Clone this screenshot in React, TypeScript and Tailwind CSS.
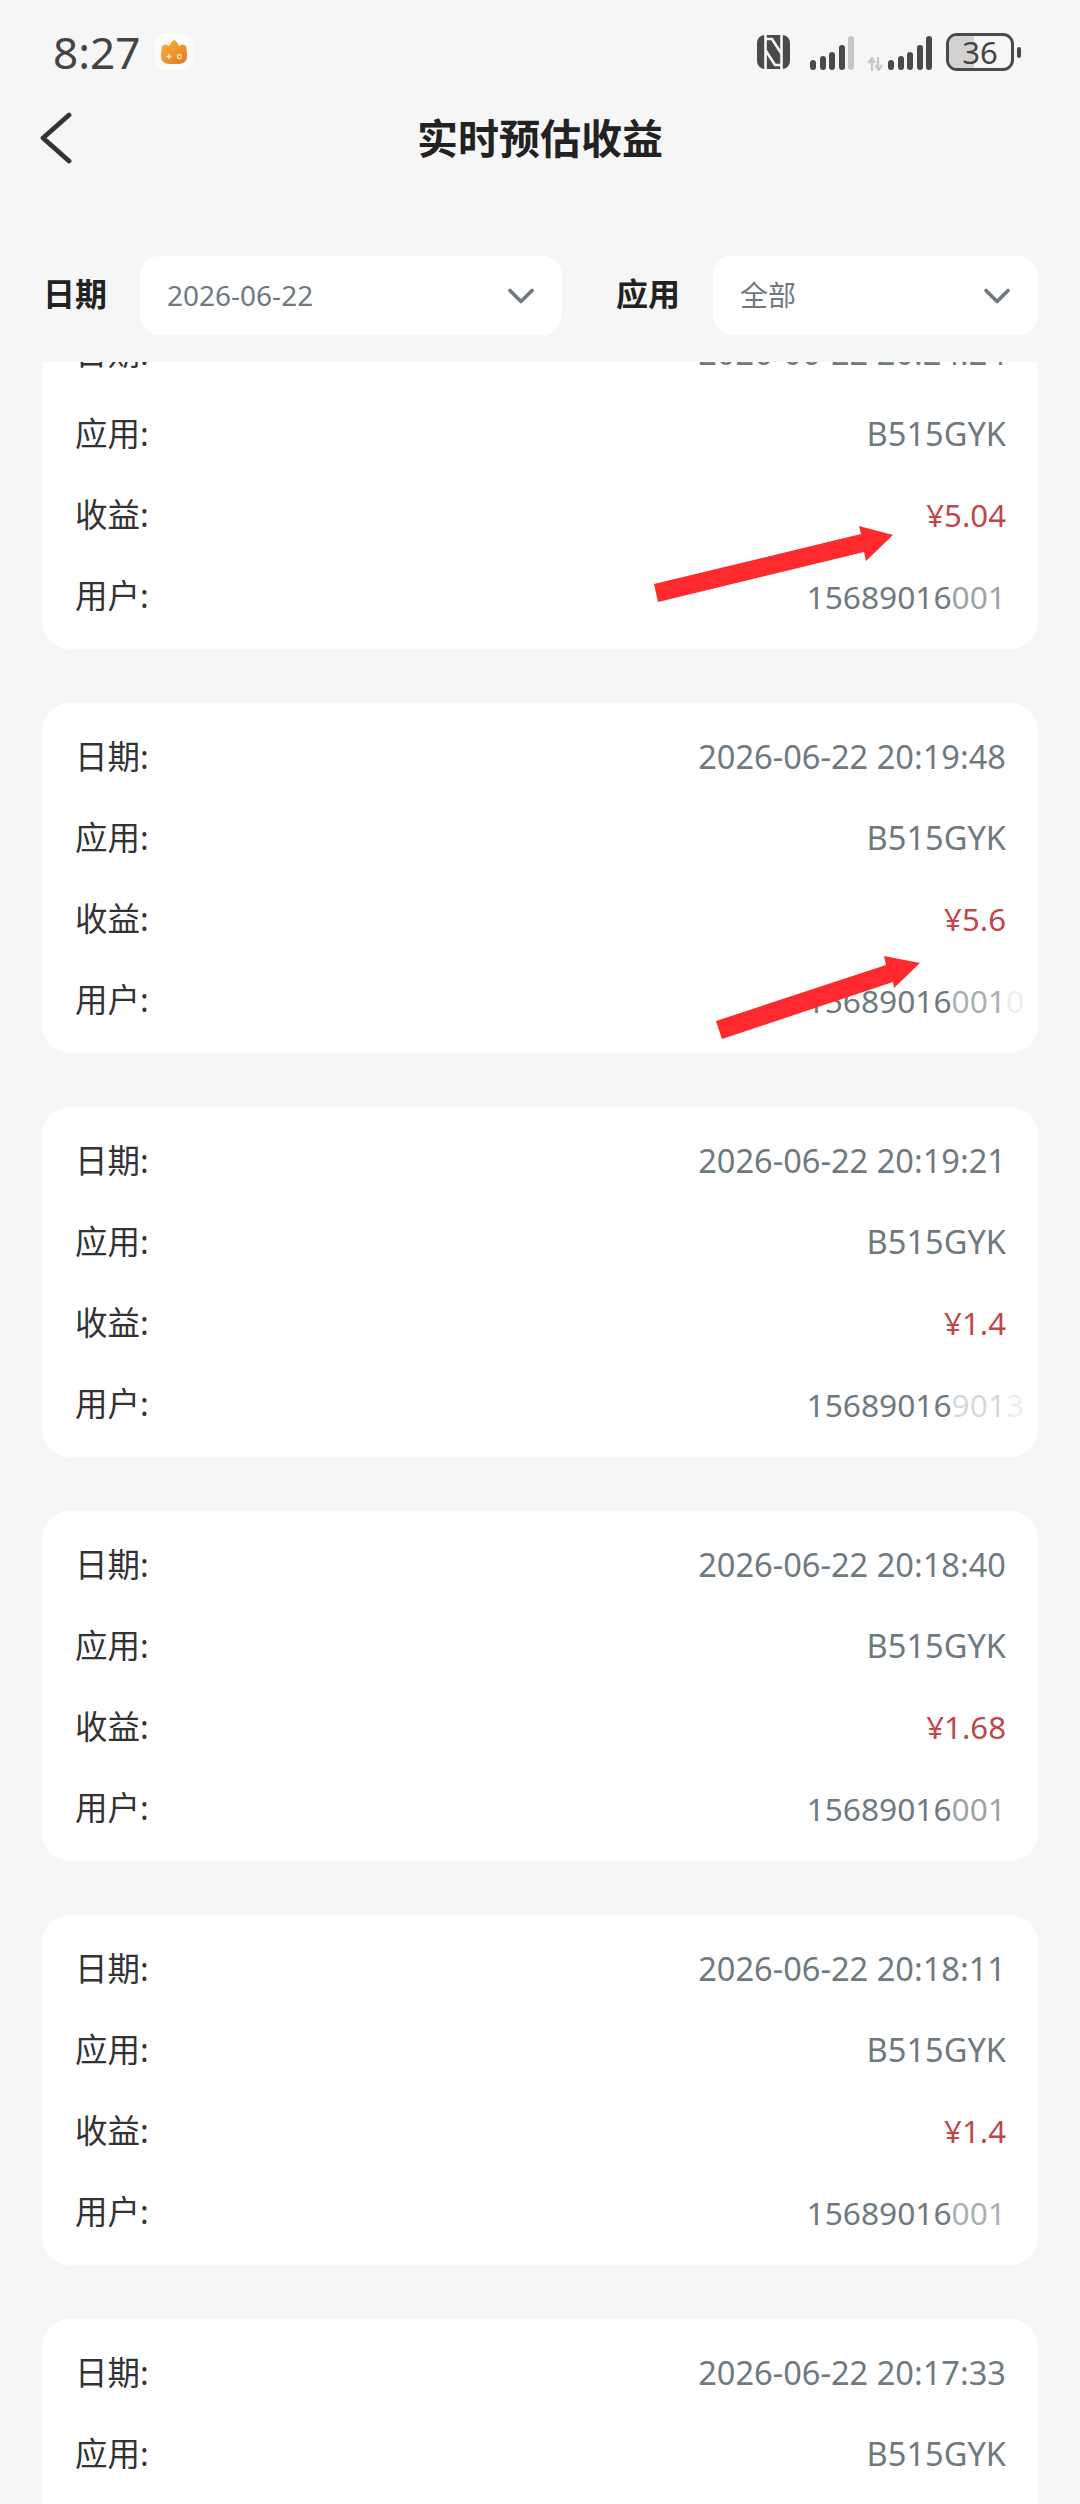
import { ChevronDown } from 'lucide-react'

const FONT = "font-['Noto_Sans','Noto_Sans_CJK_SC',sans-serif]"

const RECORDS = [
  { date: '2026-06-22 20:24:24', amount: '¥5.04', tail: '001', tailClass: 'text-[#6f7a80]/70', fade: '' },
  { date: '2026-06-22 20:19:48', amount: '¥5.6', tail: '001', tailClass: 'text-[#6f7a80]/60', fade: '0' },
  { date: '2026-06-22 20:19:21', amount: '¥1.4', tail: '901', tailClass: 'text-[#6f7a80]/30', fade: '3' },
  { date: '2026-06-22 20:18:40', amount: '¥1.68', tail: '001', tailClass: 'text-[#6f7a80]/70', fade: '' },
  { date: '2026-06-22 20:18:11', amount: '¥1.4', tail: '001', tailClass: 'text-[#6f7a80]/60', fade: '' },
  { date: '2026-06-22 20:17:33', amount: '¥1.4', tail: '001', tailClass: 'text-[#6f7a80]/70', fade: '' },
]

function Row({ label, children }: { label: string; children: React.ReactNode }) {
  return (
    <div className="flex h-[81px] items-center justify-between">
      <span className="text-[32.5px] text-[#333]">{label}:</span>
      {children}
    </div>
  )
}

function Signal({ tops, dim }: { tops: number[]; dim?: boolean }) {
  return (
    <div className="flex h-[36px] items-end gap-[3.5px]">
      {tops.map((h, i) => (
        <span
          key={i}
          className={`w-[6px] rounded-full ${dim && i === tops.length - 1 ? 'bg-[#c6c6c6]' : 'bg-[#4a4a4a]'}`}
          style={{ height: h }}
        />
      ))}
    </div>
  )
}

function StatusBar() {
  return (
    <div className="flex h-[100px] items-center justify-between pl-[53px] pr-[59px] pt-[4px]">
      <div className="flex items-center gap-[15px]">
        <span className="text-[44px] leading-none text-[#444]">8:27</span>
        <div className="flex h-[36px] w-[38px] items-center justify-center rounded-[8px] bg-white/70">
          <svg width="26" height="24" viewBox="0 0 26 24">
            <defs>
              <linearGradient id="flame" x1="0" y1="0" x2="1" y2="1">
                <stop offset="0" stopColor="#f8b53c" />
                <stop offset="1" stopColor="#ec7420" />
              </linearGradient>
            </defs>
            <path d="M1 6 Q5 3 8 6 Q11 1 13 0 Q16 1 18 6 Q21 3 25 6 Q26 12 26 16 Q26 24 17 24 H9 Q0 24 0 16 Q0 12 1 6 Z" fill="url(#flame)" />
            <path d="M5.500 16.500 h5 M8 14 v5" stroke="#ffe3b0" strokeWidth="1.5" />
            <circle cx="18.500" cy="16.500" r="2" fill="none" stroke="#ffe3b0" strokeWidth="1.300" />
          </svg>
        </div>
      </div>
      <div className="flex items-center">
        <svg width="33" height="34" viewBox="0 0 33 34" className="mr-[20px]">
          <rect width="33" height="34" rx="8" fill="#4a4a4a" />
          <path d="M8.500 0 V34 M24.500 0 V34 M9 4 H15 L24 18 M9 16 L18 30 H24" stroke="#f6f6f6" strokeWidth="2.600" fill="none" />
        </svg>
        <Signal tops={[10, 14, 18, 25, 34]} dim />
        <svg width="16" height="14" viewBox="0 0 16 14" className="ml-[13px] mr-[5px] self-end">
          <path d="M5 14 V3 M1.500 6 L5 1 L8 6 M11 0 V11 M8.500 8 L11.500 13 L15 8" stroke="#c6c6c6" strokeWidth="2.200" fill="none" />
        </svg>
        <Signal tops={[10, 14, 18, 25, 34]} />
        <div className="relative ml-[14px] flex h-[38px] w-[68px] items-center justify-center rounded-[11px] border-[3px] border-[#4a4a4a]">
          <span className="absolute inset-y-0 left-0 w-[25px] rounded-l-[8px] bg-[#d2d2d2]" />
          <span className="relative text-[31px] leading-none text-[#444]">36</span>
        </div>
        <span className="ml-[3px] h-[11px] w-[4px] rounded-full bg-[#4a4a4a]" />
      </div>
    </div>
  )
}

function Select({ value, className }: { value: string; className: string }) {
  return (
    <div className={`flex h-[79px] items-center justify-between rounded-[20px] bg-white pl-[27px] pr-[19px] ${className}`}>
      <span className="pb-[2px] text-[28px] text-[#6f7a80]">{value}</span>
      <ChevronDown size={44} strokeWidth={2} className="text-[#6f7a80]" />
    </div>
  )
}

export default function App() {
  return (
    <div className={`relative h-[2504px] w-[1080px] overflow-hidden bg-[#f6f6f6] ${FONT}`}>
      <StatusBar />

      <div className="relative flex h-[78px] items-center justify-center">
        <svg width="32" height="52" viewBox="0 0 32 52" className="absolute left-[40px] top-[12px]">
          <path d="M29 3 L3 26 L29 49" fill="none" stroke="#333" strokeWidth="4.800" strokeLinecap="round" strokeLinejoin="round" />
        </svg>
        <span className="text-[41px] font-semibold text-[#222]">实时预估收益</span>
      </div>

      <div className="mt-[78px] flex h-[79px] items-center pl-[43px] pr-[42px]">
        <span className="w-[97px] pb-[3px] text-[32px] font-semibold text-[#222]">日期</span>
        <Select value="2026-06-22" className="w-[422px]" />
        <span className="ml-[54px] w-[97px] pb-[3px] text-[32px] font-semibold text-[#222]">应用</span>
        <Select value="全部" className="w-[325px]" />
      </div>

      <div className="mt-[27px] h-[2142px] overflow-hidden px-[42px]">
        <div className="mt-[-63px] flex flex-col gap-[54px]">
          {RECORDS.map(r => (
            <div key={r.date} className="rounded-[28px] bg-white pb-[12px] pl-[33px] pr-[32px] pt-[14px]">
              <Row label="日期">
                <span className="text-[32.6px] text-[#6f7a80]">{r.date}</span>
              </Row>
              <Row label="应用">
                <span className="text-[32.6px] text-[#6f7a80]">B515GYK</span>
              </Row>
              <Row label="收益">
                <span className="text-[31.2px] text-[#c0474a]">{r.amount}</span>
              </Row>
              <Row label="用户">
                <span className="relative text-[31.7px] text-[#6f7a80]">
                  15689016
                  <span className={r.tailClass}>{r.tail}</span>
                  {r.fade && (
                    <span className="absolute left-full top-0 text-[#6f7a80]/15">{r.fade}</span>
                  )}
                </span>
              </Row>
            </div>
          ))}
        </div>
      </div>

      {/* red annotation arrows drawn over the screenshot */}
      <svg className="absolute left-0 top-0" width="1080" height="2504" viewBox="0 0 1080 2504">
        <polygon points="654,584 861,534 859,526 893,535 866,561 864,552 658,602" fill="#fe2a2e" />
        <polygon points="716,1021 886,965 884,956 920,963 894,988 893,982 722,1039" fill="#fe2a2e" />
      </svg>
    </div>
  )
}
